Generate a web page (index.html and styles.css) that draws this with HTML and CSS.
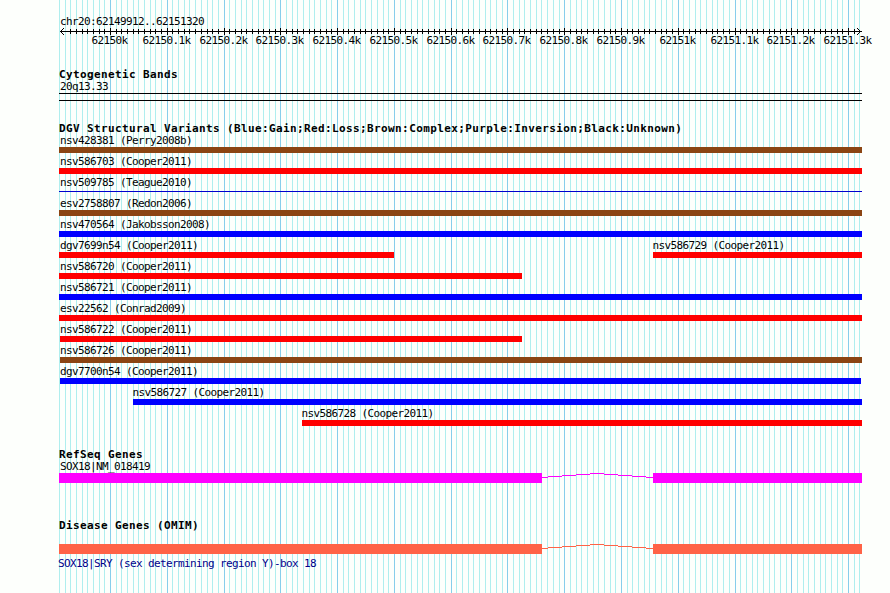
FILE: index.html
```html
<!DOCTYPE html>
<html lang="en">
<head>
    <meta charset="UTF-8">
    <title>chr20:62149912..62151320</title>
    <link rel="stylesheet" href="styles.css">
</head>
<body>

<div class="browser">
    <svg class="grid" id="grid" width="890" height="593"></svg>

    <div class="tracks">
        <div class="region">chr20:62149912..62151320</div>
        <svg class="ruler" id="ruler" width="890" height="24"></svg>

        <h2 class="cyto-title">Cytogenetic Bands</h2>
        <div class="name">20q13.33</div>
        <div class="band"></div>

        <h2 class="dgv-title">DGV Structural Variants (Blue:Gain;Red:Loss;Brown:Complex;Purple:Inversion;Black:Unknown)</h2>
        <div id="variants"></div>

        <h2 class="refseq-title">RefSeq Genes</h2>
        <div class="name">SOX18|NM_018419</div>
        <div class="gene refseq">
            <div class="exon"></div>
            <svg class="intron" width="111" height="10"><path d="M0 4.5H6M6 3.5H20M20 2.5H34M34 1.5H48M48 .5H62M62 1.5H76M76 2.5H90M90 3.5H104M104 4.5H111"/></svg>
            <div class="exon"></div>
        </div>

        <h2 class="omim-title">Disease Genes (OMIM)</h2>
        <div class="gene omim">
            <div class="exon"></div>
            <svg class="intron" width="111" height="10"><path d="M0 4.5H6M6 3.5H20M20 2.5H34M34 1.5H48M48 .5H62M62 1.5H76M76 2.5H90M90 3.5H104M104 4.5H111"/></svg>
            <div class="exon"></div>
        </div>
        <div class="name link">SOX18|SRY (sex determining region Y)-box 18</div>
    </div>
</div>

<script src="script.js"></script>
</body>
</html>
```
FILE: styles.css
```css
body {
    margin: 0;
    background-color: #fdfffc;
    color: #000;
    font-family: "DejaVu Sans Mono", monospace;
}
.browser {
    position: relative;
    width: 890px;
    height: 593px;
    overflow: hidden;
}
.grid {
    position: absolute;
    top: 0;
    left: 0;
}
.grid line {
    stroke: #afeeee;
    shape-rendering: crispEdges;
}
.grid .major {
    stroke: #87ceeb;
}
.tracks {
    position: relative;
    width: 803px;
    padding: 14px 0 0 59px;
}
.region, .name {
    height: 13px;
    padding-left: 1px;
    font-size: 11px;
    line-height: 15px;
    letter-spacing: -0.62px;
    white-space: pre;
}
.ruler {
    display: block;
    margin-left: -59px;
}
.ruler path {
    fill: none;
    stroke: #000;
    shape-rendering: crispEdges;
}
.ruler text {
    font-size: 11px;
    letter-spacing: -0.62px;
}
h2 {
    height: 13px;
    margin: 0;
    font-size: 11px;
    line-height: 15px;
    letter-spacing: 0.38px;
    white-space: pre;
}
.cyto-title {
    margin-top: 16px;
}
.cyto-title + .name {
    margin-top: -1px;
}
.band {
    height: 6px;
    margin-top: 1px;
    border-top: 1px solid #000;
    border-bottom: 1px solid #000;
}
.dgv-title {
    margin-top: 20px;
    margin-bottom: -2px;
}
.row {
    display: grid;
    height: 21px;
}
.variant {
    grid-area: 1 / 1;
}
.variant .name {
    height: 15px;
    line-height: 17px;
}
.bar {
    height: 6px;
}
.gain {
    background-color: #0000ff;
}
.loss {
    background-color: #ff0000;
}
.complex {
    background-color: #8b4513;
}
.thin {
    height: 1px;
    margin-top: 2px;
    background-color: #0000cd;
}
.refseq-title {
    margin-top: 21px;
    margin-bottom: -1px;
}
/* keeps the underscore in front of the gene bar */
.refseq-title + .name {
    position: relative;
    z-index: 1;
}
.gene {
    display: grid;
    grid-template-columns: 483px 111px 209px;
    height: 10px;
}
.intron {
    fill: none;
    shape-rendering: crispEdges;
}
.refseq {
    margin-top: 1px;
}
.refseq .exon {
    background-color: #ff00ff;
}
.refseq .intron {
    stroke: #ff00ff;
}
.omim-title {
    margin-top: 35px;
    margin-bottom: 13px;
}
.omim .exon {
    background-color: #ff6347;
}
.omim .intron {
    stroke: #ff6347;
}
.link {
    margin-top: 2px;
    padding-left: 0;
    margin-left: -1px;
    color: #00008b;
}
```
FILE: script.js
```js
const SVG = "http://www.w3.org/2000/svg";
const LEFT = 59;
const RIGHT = 862;

// pixel column of the n-th 10bp step, counted from 62150k
function column(n) {
    return Math.round(110 + n * 5.6775);
}

function add(parent, tag, attrs, text) {
    const el = document.createElementNS(SVG, tag);
    for (const key in attrs) el.setAttribute(key, attrs[key]);
    if (text) el.textContent = text;
    parent.appendChild(el);
}

const grid = document.getElementById("grid");
const ruler = document.getElementById("ruler");

// ruler line with the arrow heads
let ticks = "M60 4.5H862M61.5 3v1M61.5 5v1M62.5 2v1M62.5 6v1M63.5 1v1M63.5 7v1" +
    "M859.5 3v1M859.5 5v1M858.5 2v1M858.5 6v1M857.5 1v1M857.5 7v1";

for (let n = -9; n <= 132; n++) {
    const x = column(n) + 0.5;
    const major = n % 10 === 0;
    add(grid, "line", { x1: x, x2: x, y1: 0, y2: 593, class: major ? "major" : "minor" });
    if (n > -8 && n < 132) ticks += major ? `M${x} 1v7` : `M${x} 2v5`;
    if (major) {
        const label = (62150 + n / 100) + "k";
        add(ruler, "text", { x: column(n) - label.length * 3 - 0.5, y: 17 }, label);
    }
}
add(ruler, "path", { d: ticks });

// each row: [name, start, end, type]
const rows = [
    [["nsv428381 (Perry2008b)", LEFT, RIGHT, "complex"]],
    [["nsv586703 (Cooper2011)", LEFT, RIGHT, "loss"]],
    [["nsv509785 (Teague2010)", LEFT, RIGHT, "thin"]],
    [["esv2758807 (Redon2006)", LEFT, RIGHT, "complex"]],
    [["nsv470564 (Jakobsson2008)", LEFT, RIGHT, "gain"]],
    [["dgv7699n54 (Cooper2011)", LEFT, 394, "loss"], ["nsv586729 (Cooper2011)", 653, RIGHT, "loss"]],
    [["nsv586720 (Cooper2011)", LEFT, 522, "loss"]],
    [["nsv586721 (Cooper2011)", LEFT, RIGHT, "gain"]],
    [["esv22562 (Conrad2009)", LEFT, RIGHT, "loss"]],
    [["nsv586722 (Cooper2011)", 60, 522, "loss"]],
    [["nsv586726 (Cooper2011)", 60, RIGHT, "complex"]],
    [["dgv7700n54 (Cooper2011)", 60, 861, "gain"]],
    [["nsv586727 (Cooper2011)", 133, RIGHT, "gain"]],
    [["nsv586728 (Cooper2011)", 302, RIGHT, "loss"]]
];

const variants = document.getElementById("variants");
rows.forEach(items => {
    const row = document.createElement("div");
    row.className = "row";
    items.forEach(([name, start, end, type]) => {
        const variant = document.createElement("div");
        variant.className = "variant";
        variant.style.marginLeft = (start - LEFT) + "px";
        variant.style.width = (end - start) + "px";
        variant.innerHTML = `<div class="name">${name}</div><div class="bar ${type}"></div>`;
        // names line up on one column even where the bar starts a pixel in
        if (start > LEFT) variant.firstChild.style.paddingLeft = "0";
        if (start > LEFT + 1) variant.firstChild.style.marginLeft = "-0.5px";
        row.appendChild(variant);
    });
    variants.appendChild(row);
});
```
